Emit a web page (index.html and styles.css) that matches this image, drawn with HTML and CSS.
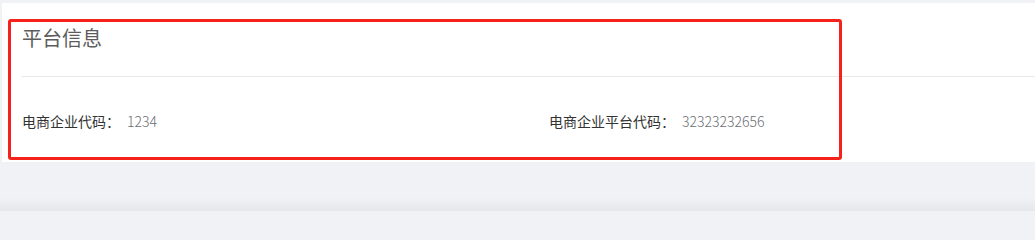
FILE: index.html
```html
<!DOCTYPE html>
<html lang="zh-CN">
<head>
<meta charset="utf-8">
<title>平台信息</title>
<link rel="stylesheet" href="styles.css">
</head>
<body>
<div class="page">
  <section class="panel">
    <h2 class="panel-title">平台信息</h2>
    <div class="info-row">
      <div class="info-item">
        <span class="info-label">电商企业代码：</span>
        <span class="info-value">1234</span>
      </div>
      <div class="info-item">
        <span class="info-label">电商企业平台代码：</span>
        <span class="info-value">32323232656</span>
      </div>
    </div>
    <div class="highlight"></div>
  </section>
  <div class="page-fill"></div>
</div>
</body>
</html>
```
FILE: styles.css
```css
html, body {
  margin: 0;
  padding: 0;
  background: #f0f2f5;
  height: 211px;
  overflow: hidden;
}
body {
  font-family: "Noto Sans CJK SC", "Noto Sans", sans-serif;
  width: 1035px;
}
.page {
  display: flex;
  flex-direction: column;
  height: 211px;
  padding-top: 3px;
  box-sizing: border-box;
}
.panel {
  position: relative;
  margin-left: 2px;
  background: #ffffff;
  height: 159px;
  flex: none;
  padding-left: 20px;
  box-sizing: border-box;
  padding-top: 25px;
}
.panel-title {
  margin: 0;
  font-size: 20px;
  line-height: 20px;
  font-weight: normal;
  color: #5c5c5c;
  padding-bottom: 28px;
  border-bottom: 1px solid #e8e8e8;
}
.info-row {
  display: grid;
  grid-template-columns: 527px 1fr;
  padding-top: 37px;
  font-size: 14px;
  line-height: 14px;
}
.info-item {
  display: flex;
  align-items: baseline;
}
.info-label {
  color: #333333;
  margin-right: 7px;
}
.info-value {
  color: #6b6e74;
  font-weight: 300;
}
.highlight {
  position: absolute;
  left: 6px;
  top: 16px;
  width: 834px;
  height: 141px;
  border: 3px solid #f5221b;
  border-radius: 3px;
  box-sizing: border-box;
  pointer-events: none;
}
.page-fill {
  flex: 1;
  background: linear-gradient(to bottom, #f0f2f5 0, #f0f2f5 36px, #e6e7ea 49px);
}
```
